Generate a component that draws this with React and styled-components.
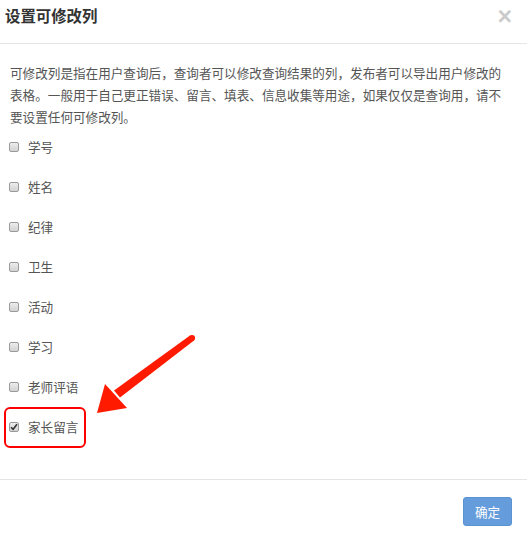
import React from "react";
import styled, { createGlobalStyle } from "styled-components";

const Global = createGlobalStyle`
  html, body { margin: 0; padding: 0; background: #fff; }
  body { font-family: "Liberation Sans", "Noto Sans CJK SC", sans-serif; }
  * { box-sizing: border-box; }
`;

const Dialog = styled.div`
  position: relative;
  width: 527px;
  height: 535px;
  background: #fff;
  display: flex;
  flex-direction: column;
`;

const Header = styled.div`
  height: 44px;
  border-bottom: 1px solid #e5e5e5;
  display: flex;
  align-items: flex-start;
  justify-content: space-between;
  padding: 7px 15px 0 5px;
`;

const Title = styled.h4`
  margin: 0;
  font-size: 15.4px;
  line-height: 20px;
  font-weight: bold;
  color: #333;
`;

const Close = styled.button`
  border: 0;
  background: none;
  padding: 0;
  margin-top: -5px;
  font-family: "Liberation Sans", sans-serif;
  font-size: 25px;
  line-height: 28px;
  font-weight: bold;
  color: #000;
  opacity: 0.2;
  cursor: pointer;
`;

const Body = styled.div`
  padding: 19px 20px 41px 10px;
  color: #555;
  font-size: 12.6px;
`;

const Intro = styled.p`
  margin: 0 0 9px;
  line-height: 22px;
  width: 497px;
`;

const List = styled.div`
  display: flex;
  flex-direction: column;
  gap: 20px;
`;

const Row = styled.label`
  position: relative;
  display: flex;
  align-items: flex-start;
  gap: 9px;
  line-height: 20px;
  height: 20px;
`;

const Box = styled.span`
  width: 10px;
  height: 10px;
  margin: 4px 0 0 -1px;
  border: 1px solid #9a9a9a;
  border-radius: 2px;
  background: linear-gradient(#ececec, #d2d2d2);
  display: flex;
  align-items: center;
  justify-content: center;
`;

const Highlight = styled.span`
  position: absolute;
  left: -6px;
  top: -11px;
  width: 82px;
  height: 41px;
  border: 2px solid #f00;
  border-radius: 6px;
  pointer-events: none;
`;

const Footer = styled.div`
  margin-top: auto;
  border-top: 1px solid #e5e5e5;
  height: 56px;
  display: flex;
  justify-content: flex-end;
  align-items: flex-start;
  padding: 17px 15px 0 0;
`;

const PrimaryButton = styled.button`
  width: 49px;
  height: 29px;
  border: 1px solid #5a92d2;
  border-radius: 3px;
  background: #659cdb;
  color: #fff;
  font-family: "Liberation Sans", "Noto Sans CJK SC", sans-serif;
  font-size: 12.6px;
  padding: 0;
  cursor: pointer;
`;

const Annotation = styled.svg`
  position: absolute;
  left: 0;
  top: 0;
  pointer-events: none;
`;

const columns = [
  { name: "学号" },
  { name: "姓名" },
  { name: "纪律" },
  { name: "卫生" },
  { name: "活动" },
  { name: "学习" },
  { name: "老师评语" },
  { name: "家长留言", checked: true, mark: true },
];

function Check({ checked }) {
  return (
    <Box>
      {checked && (
        <svg width="8" height="8" viewBox="0 0 8 8">
          <path d="M1 4.2 L3.1 6.3 L7 1.2" fill="none" stroke="#333" strokeWidth="1.6" />
        </svg>
      )}
    </Box>
  );
}

export default function App() {
  return (
    <>
      <Global />
      <Dialog>
        <Header>
          <Title>设置可修改列</Title>
          <Close>×</Close>
        </Header>
        <Body>
          <Intro>
            可修改列是指在用户查询后，查询者可以修改查询结果的列，发布者可以导出用户修改的表格。一般用于自己更正错误、留言、填表、信息收集等用途，如果仅仅是查询用，请不要设置任何可修改列。
          </Intro>
          <List>
            {columns.map((c) => (
              <Row key={c.name}>
                <Check checked={c.checked} />
                <span>{c.name}</span>
                {c.mark && <Highlight />}
              </Row>
            ))}
          </List>
        </Body>
        <Footer>
          <PrimaryButton>确定</PrimaryButton>
        </Footer>
        <Annotation width="527" height="535" viewBox="0 0 527 535">
          <polygon
            points="194,340.5 190,335.5 114,390.5 120,397.5"
            fill="#ff1a00"
          />
          <circle cx="192" cy="338" r="3.1" fill="#ff1a00" />
          <polygon points="97,413 105,384 127,408" fill="#ff1a00" />
        </Annotation>
      </Dialog>
    </>
  );
}
